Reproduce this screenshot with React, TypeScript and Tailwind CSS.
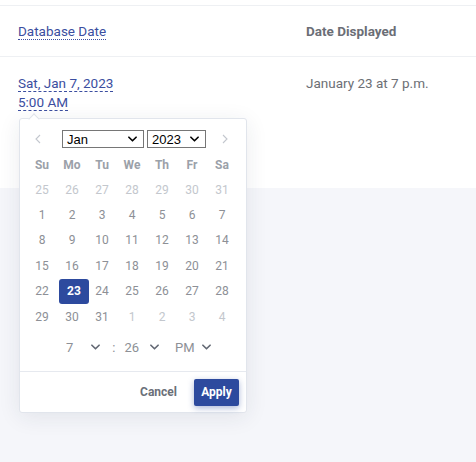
const weekdays = ["Su", "Mo", "Tu", "We", "Th", "Fr", "Sa"];

type Day = { n: number; out?: boolean };

const weeks: Day[][] = [
  [25, 26, 27, 28, 29, 30, 31].map((n) => ({ n, out: true })),
  [1, 2, 3, 4, 5, 6, 7].map((n) => ({ n })),
  [8, 9, 10, 11, 12, 13, 14].map((n) => ({ n })),
  [15, 16, 17, 18, 19, 20, 21].map((n) => ({ n })),
  [22, 23, 24, 25, 26, 27, 28].map((n) => ({ n })),
  [
    { n: 29 },
    { n: 30 },
    { n: 31 },
    { n: 1, out: true },
    { n: 2, out: true },
    { n: 3, out: true },
    { n: 4, out: true },
  ],
];

function Chevron({ className = "" }: { className?: string }) {
  return (
    <svg viewBox="0 0 10 6" className={className} fill="none" aria-hidden="true">
      <path d="M1 1l4 4 4-4" stroke="currentColor" strokeWidth="1.8" strokeLinecap="round" strokeLinejoin="round" />
    </svg>
  );
}

function FakeSelect({ label, width }: { label: string; width: string }) {
  return (
    <div
      className={`flex h-[18px] items-center justify-between border border-[#767676] bg-white pl-[4px] pr-[6px] font-['Liberation_Sans',sans-serif] text-[13px] text-black ${width}`}
    >
      <span className="leading-none">{label}</span>
      <Chevron className="h-[6px] w-[9px] text-black" />
    </div>
  );
}

function DatePopover() {
  return (
    <div className="absolute left-[19px] top-[118px] w-[228px] rounded-[3px] border border-[#e1e5ec] bg-white shadow-[0_4px_22px_rgba(30,40,70,0.09)]">
      <div className="absolute left-[10px] top-[-4px] h-[8px] w-[8px] rotate-45 border-l border-t border-[#dfe3ea] bg-white" />

      <div className="flex items-center pl-[15px] pt-[11px]">
        <svg viewBox="0 0 6 10" className="h-[10px] w-[6px]" fill="none" aria-hidden="true">
          <path d="M5 1L1 5l4 4" stroke="#c3c7ce" strokeWidth="1.1" />
        </svg>
        <div className="ml-[21px] flex gap-[3px]">
          <FakeSelect label="Jan" width="w-[82px]" />
          <FakeSelect label="2023" width="w-[59px]" />
        </div>
        <svg viewBox="0 0 6 10" className="ml-[16px] h-[10px] w-[6px]" fill="none" aria-hidden="true">
          <path d="M1 1l4 4-4 4" stroke="#c3c7ce" strokeWidth="1.1" />
        </svg>
      </div>

      <div className="mt-[4px] pl-[7px]">
        <div className="grid w-[210px] grid-cols-7">
          {weekdays.map((d) => (
            <div key={d} className="flex h-[25px] items-center justify-center text-[12px] font-bold text-[#9ba1a9]">
              {d}
            </div>
          ))}
        </div>
        {weeks.map((week, i) => (
          <div key={i} className="grid h-[25.4px] w-[210px] grid-cols-7">
            {week.map((d, j) => {
              const selected = !d.out && d.n === 23;
              return (
                <div
                  key={j}
                  className={`flex items-center justify-center rounded-[3px] text-[12px] ${
                    selected
                      ? "translate-x-[2px] bg-[#2d4a9e] font-bold text-white"
                      : d.out
                        ? "text-[#c3c7cd]"
                        : "text-[#8d9096]"
                  }`}
                >
                  {d.n}
                </div>
              );
            })}
          </div>
        ))}
      </div>

      <div className="mt-[8px] flex h-[20px] items-center pl-[46px] text-[13px] text-[#8d9096]">
        <span>7</span>
        <Chevron className="ml-[18px] h-[6px] w-[9px] text-[#626873]" />
        <span className="ml-[12px]">:</span>
        <span className="ml-[9px]">26</span>
        <Chevron className="ml-[11px] h-[6px] w-[9px] text-[#626873]" />
        <span className="ml-[16px]">PM</span>
        <Chevron className="ml-[7px] h-[6px] w-[9px] text-[#626873]" />
      </div>

      <div className="mt-[14px] flex h-[41px] items-center justify-end gap-[17px] border-t border-[#e6e9ef] pr-[7px]">
        <button className="text-[12px] font-bold text-[#6b7079]">Cancel</button>
        <button className="h-[27px] w-[45px] rounded-[2px] bg-[#2d4a9e] text-[12px] font-bold text-white shadow-[0_2px_6px_rgba(45,74,158,0.4)]">
          Apply
        </button>
      </div>
    </div>
  );
}

export default function App() {
  return (
    <div className="relative min-h-[462px] bg-[#f5f6fa] font-['Roboto',sans-serif]">
      <div className="h-[188px] bg-white pt-[5px]">
        <div className="flex h-[52px] items-center border-y border-[#eef0f3] text-[13.5px]">
          <div className="w-[306px] pl-[18px]">
            <span className="inline-block border-b border-dotted border-[#3b4ea0] leading-[16px] text-[#3b4ea0]">
              Database Date
            </span>
          </div>
          <div className="font-bold text-[#6b6e76]">Date Displayed</div>
        </div>
        <div className="flex pt-[19px] text-[13.5px]">
          <div className="flex w-[306px] flex-col items-start pl-[18px] text-[#3b4ea0]">
            <span className="inline-block border-b border-dashed border-[#3b4ea0] leading-[15px]">Sat, Jan 7, 2023</span>
            <span className="mt-[3px] inline-block border-b border-dashed border-[#3b4ea0] leading-[15px]">5:00 AM</span>
          </div>
          <div className="leading-[15px] text-[#6d6f75]">January 23 at 7 p.m.</div>
        </div>
      </div>
      <DatePopover />
    </div>
  );
}
